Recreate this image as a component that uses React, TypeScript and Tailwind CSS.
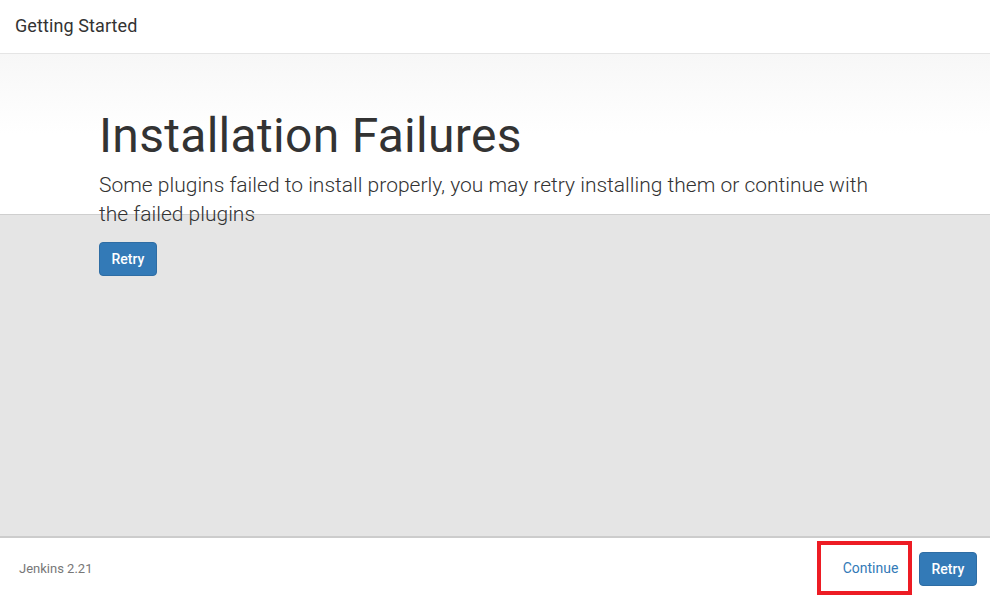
export default function App() {
  const font = { fontFamily: "Roboto, 'Liberation Sans', sans-serif" };
  return (
    <div className="w-[990px] h-[600px] flex flex-col bg-white text-[#333]" style={font}>
      <header className="h-[54px] shrink-0 border-b border-[#e5e5e5] flex items-center px-[15px] pb-[2px]">
        <h1 className="text-[18px] font-normal text-[#333] tracking-[0.1px]">Getting Started</h1>
      </header>
      <main className="flex-1 bg-[#e5e5e5] border-b-2 border-[#cccccc]">
        <div className="h-[161px] border-b border-[#cfcfcf] bg-gradient-to-b from-[#f7f7f7] to-white to-50%">
          <div className="pl-[99px] pr-[110px] pt-[53px]">
            <h2 className="text-[48px] leading-[58px] font-normal text-[#333] tracking-[0.3px]">Installation Failures</h2>
            <p className="mt-[6px] text-[21px] leading-[29px] font-light text-[#333]">
              Some plugins failed to install properly, you may retry installing them or continue with the failed plugins
            </p>
            <button className="mt-[13px] h-[34px] w-[58px] rounded-[4px] bg-[#337ab7] border border-[#2e6da4] text-white text-[14px] font-medium">
              Retry
            </button>
          </div>
        </div>
      </main>
      <footer className="h-[62px] shrink-0 flex items-center pl-[19px] pr-[13px]">
        <span className="text-[13px] text-[#777]">Jenkins 2.21</span>
        <div className="ml-auto flex items-center">
          <div className="w-[95px] h-[54px] border-[4px] border-[#ed1c24] flex items-center justify-center mb-[3px]">
            <span className="text-[14px] text-[#337ab7] ml-[12px] mt-[1px]">Continue</span>
          </div>
          <button className="ml-[7px] h-[34px] w-[58px] rounded-[4px] bg-[#337ab7] border border-[#2e6da4] text-white text-[14px] font-medium">
            Retry
          </button>
        </div>
      </footer>
    </div>
  );
}
